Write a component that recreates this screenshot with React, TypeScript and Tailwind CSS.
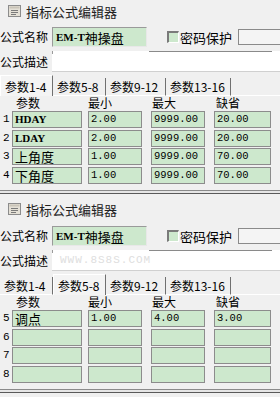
import React from "react";

type Row = [string, string, string, string, string];

const topRows: Row[] = [
  ["1", "HDAY", "2.00", "9999.00", "20.00"],
  ["2", "LDAY", "2.00", "9999.00", "20.00"],
  ["3", "上角度", "1.00", "9999.00", "70.00"],
  ["4", "下角度", "1.00", "9999.00", "70.00"],
];

const bottomRows: Row[] = [
  ["5", "调点", "1.00", "4.00", "3.00"],
  ["6", "", "", "", ""],
  ["7", "", "", "", ""],
  ["8", "", "", "", ""],
];

const tabs = [
  { label: "参数1-4", w: "w-[53px]" },
  { label: "参数5-8", w: "w-[53px]" },
  { label: "参数9-12", w: "w-[60px]" },
  { label: "参数13-16", w: "w-[65px]" },
];

function TitleIcon() {
  return (
    <svg width="13" height="12" viewBox="0 0 13 12">
      <rect x="0.5" y="0.5" width="12" height="11" fill="#e4e0d6" stroke="#8c8c8c" />
      <rect x="1.5" y="1.5" width="10" height="2" fill="#c9c4b8" />
      <line x1="3" y1="5.5" x2="10" y2="5.5" stroke="#7a7a7a" />
      <line x1="3" y1="7.5" x2="10" y2="7.5" stroke="#7a7a7a" />
      <line x1="3" y1="9.5" x2="8" y2="9.5" stroke="#7a7a7a" />
    </svg>
  );
}

function isLatin(s: string) {
  return /^[A-Za-z]+$/.test(s);
}

function Cell({ w, text, kind }: { w: string; text: string; kind: "name" | "num" }) {
  let textCls = "font-['Liberation_Mono',monospace] text-[10.5px]";
  if (kind === "name") {
    textCls = isLatin(text)
      ? "font-['Liberation_Serif',serif] font-bold text-[11px]"
      : "font-['Noto_Sans_CJK_SC',sans-serif] text-[13px]";
  }
  return (
    <div
      className={`${w} h-[17px] shrink-0 bg-[#cde8cd] border border-[#8c8c8c] flex items-center pl-[2px] leading-none text-black ${textCls}`}
    >
      {text}
    </div>
  );
}

function Panel({
  active,
  rows,
  watermark,
  second,
}: {
  active: number;
  rows: Row[];
  watermark?: boolean;
  second?: boolean;
}) {
  return (
    <div
      className={`${second ? "h-[200px]" : "h-[197px]"} flex flex-col bg-[#f0f0f0] overflow-hidden font-['Noto_Sans_CJK_SC',sans-serif] text-black`}
    >
      {/* title */}
      <div className={`${second ? "h-[24px]" : "h-[22px]"} shrink-0 flex items-center pl-[8px]`}>
        <TitleIcon />
        <span className="ml-[5px] text-[13px] leading-none text-[#222]">指标公式编辑器</span>
      </div>

      {/* name row */}
      <div className="mt-[5px] h-[20px] shrink-0 flex items-center">
        <div className="w-[52px] shrink-0 text-[12px] leading-none">公式名称</div>
        <div className="w-[95px] h-[20px] shrink-0 bg-[#cde8cd] border-t border-l border-t-[#9a9a9a] border-l-[#9a9a9a] border-r border-b border-r-[#e8e8e8] border-b-[#e8e8e8] flex items-center pl-[3px] leading-none">
          <span className="font-['Liberation_Serif',serif] font-bold text-[11px]">EM-T</span>
          <span className="text-[13px]">神操盘</span>
        </div>
        <div className="ml-[20px] w-[12px] h-[12px] shrink-0 bg-[#cde8cd] border-t-2 border-l-2 border-t-[#7a7a7a] border-l-[#7a7a7a] border-r border-b border-r-white border-b-white" />
        <div className="ml-[1px] w-[58px] shrink-0 text-[13px] leading-none">密码保护</div>
        <div className="w-[60px] h-[16px] shrink-0 bg-[#f4f4f4] border border-[#8a8a8a]" />
      </div>

      {/* description row */}
      <div className="mt-[4px] h-[21px] shrink-0 flex items-center">
        <div className="w-[52px] shrink-0 text-[12px] leading-none">公式描述</div>
        <div className="flex-1 h-[21px] bg-white border-b border-b-[#d0d0d0] flex flex-col">
          <div className="flex h-px shrink-0">
            <div className="w-px h-[3px] bg-[#9a9a9a]" />
            <div className="ml-[96px] w-[123px] h-px bg-[#8a8a8a]" />
          </div>
          <div className="flex-1 flex items-center pl-[8px]">
            {watermark && (
              <span className="font-['Liberation_Mono',monospace] text-[11px] text-[#dedede] tracking-[1px] leading-none">
                WWW.8S8S.COM
              </span>
            )}
          </div>
        </div>
      </div>

      {/* tabs */}
      <div className="mt-[2px] h-[22px] shrink-0 flex items-end">
        {tabs.map((t, i) => (
          <div
            key={t.label}
            className={`${t.w} ${
              i === active
                ? "h-[21px] bg-[#f4f4f4] border-l border-l-white border-t border-t-white pt-[1px]"
                : "h-[18px] border-b border-b-white"
            } shrink-0 border-r border-r-[#707070] flex items-center pl-[4px] text-[12px] leading-none`}
          >
            {t.label}
          </div>
        ))}
        <div className="flex-1 h-[18px] border-b border-b-white" />
      </div>

      {/* header */}
      <div className="h-[13px] shrink-0 flex items-end text-[12px] leading-none">
        <div className="w-[16px] shrink-0" />
        <div className="w-[72px] shrink-0">参数</div>
        <div className="w-[64px] shrink-0">最小</div>
        <div className="w-[64px] shrink-0">最大</div>
        <div className="shrink-0">缺省</div>
      </div>

      {/* rows */}
      <div className="mt-[2px] flex flex-col gap-[1.5px]">
        {rows.map((r) => (
          <div key={r[0]} className="flex items-center h-[17px]">
            <div className="w-[12px] shrink-0 pl-[3px] font-['Liberation_Mono',monospace] text-[11px] leading-none">
              {r[0]}
            </div>
            <Cell w="w-[70px]" text={r[1]} kind="name" />
            <div className="w-[6px] shrink-0" />
            <Cell w="w-[54px]" text={r[2]} kind="num" />
            <div className="w-[9px] shrink-0" />
            <Cell w="w-[54px]" text={r[3]} kind="num" />
            <div className="w-[9px] shrink-0" />
            <Cell w="w-[57px]" text={r[4]} kind="num" />
          </div>
        ))}
      </div>

      {/* bottom frame */}
      <div className="mt-[6px] h-[4px] shrink-0 border-t border-t-[#8a8a8a] border-b border-b-[#5a5a5a] bg-[#e6e6e6]" />
    </div>
  );
}

export default function App() {
  return (
    <div className="w-[280px] h-[397px] overflow-hidden bg-[#f0f0f0] flex flex-col">
      <Panel active={0} rows={topRows} />
      <Panel active={1} rows={bottomRows} watermark second />
    </div>
  );
}
